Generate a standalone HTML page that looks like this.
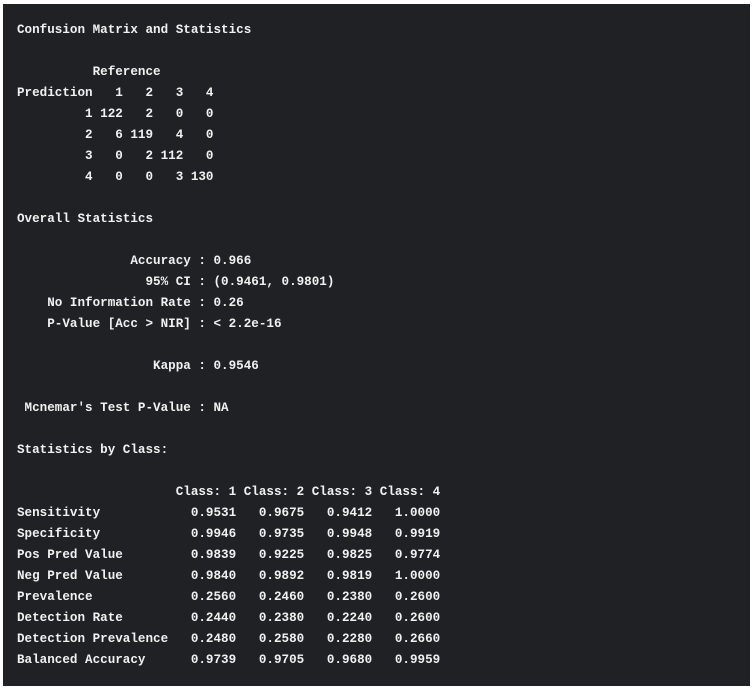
<!DOCTYPE html>
<html><head><style>
html,body{margin:0;padding:0;background:#fff;width:756px;height:690px;overflow:hidden}
.box{position:absolute;left:3px;top:4px;width:747px;height:682px;background:#202124}
pre{margin:0;position:absolute;left:14px;top:15.5px;font-family:"Liberation Mono",monospace;font-size:12.6px;line-height:21px;color:#f1f1f1;font-weight:bold}
</style></head><body><div class="box"><pre>Confusion Matrix and Statistics

          Reference
Prediction   1   2   3   4
         1 122   2   0   0
         2   6 119   4   0
         3   0   2 112   0
         4   0   0   3 130

Overall Statistics

               Accuracy : 0.966
                 95% CI : (0.9461, 0.9801)
    No Information Rate : 0.26
    P-Value [Acc &gt; NIR] : &lt; 2.2e-16

                  Kappa : 0.9546

 Mcnemar's Test P-Value : NA

Statistics by Class:

                     Class: 1 Class: 2 Class: 3 Class: 4
Sensitivity            0.9531   0.9675   0.9412   1.0000
Specificity            0.9946   0.9735   0.9948   0.9919
Pos Pred Value         0.9839   0.9225   0.9825   0.9774
Neg Pred Value         0.9840   0.9892   0.9819   1.0000
Prevalence             0.2560   0.2460   0.2380   0.2600
Detection Rate         0.2440   0.2380   0.2240   0.2600
Detection Prevalence   0.2480   0.2580   0.2280   0.2660
Balanced Accuracy      0.9739   0.9705   0.9680   0.9959</pre></div></body></html>
